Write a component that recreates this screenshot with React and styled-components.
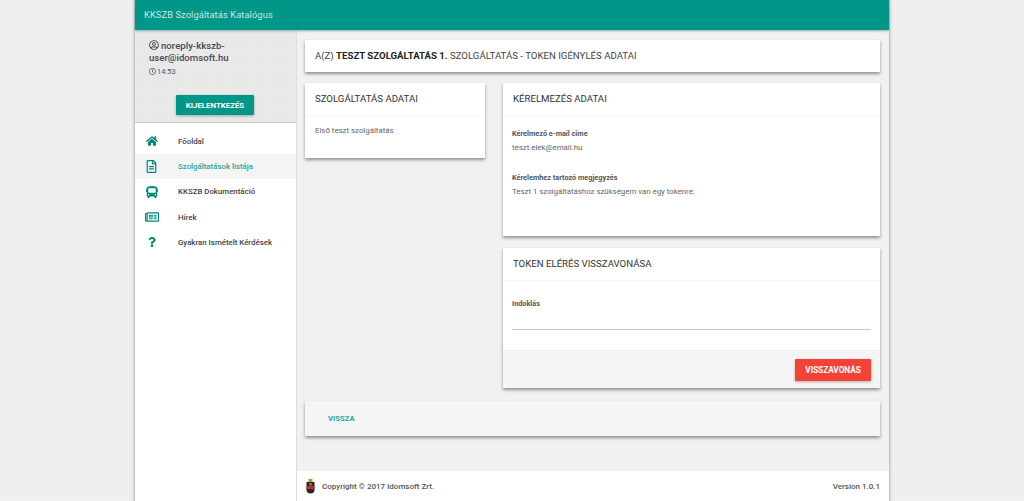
import styled, { createGlobalStyle } from "styled-components";
import { FaHome, FaRegFileAlt, FaBus, FaRegNewspaper, FaQuestion, FaRegUserCircle, FaRegClock } from "react-icons/fa";

const GlobalStyle = createGlobalStyle`
  html, body {
    margin: 0;
    padding: 0;
    height: 100%;
    overflow: hidden;
  }
  body {
    background-color: #f0f0f0;
    background-image: radial-gradient(#e9e9e9 0.6px, transparent 0.8px);
    background-size: 4px 4px;
    font-family: Roboto, "Liberation Sans", sans-serif;
    color: #333;
  }
`;

const Page = styled.div`
  width: 754px;
  height: 501px;
  margin-left: 135px;
  display: flex;
  flex-direction: column;
  box-shadow: 0 0 0 1px #c4c4c4, 0 0 3px 1px #bbb;
`;
const Header = styled.header`
  height: 30px;
  flex: none;
  background: #009688;
  color: #c8e6e2;
  font-size: 9.3px;
  line-height: 30px;
  padding-left: 9px;
  letter-spacing: 0.1px;
  box-shadow: 0 1px 2px rgba(0, 80, 70, 0.4);
  position: relative;
`;
const Body = styled.div`
  flex: 1;
  display: flex;
  min-height: 0;
`;
const Sidebar = styled.aside`
  width: 162px;
  flex: none;
  background: #fff;
  border-right: 1px solid #ddd;
  box-sizing: border-box;
`;
const Profile = styled.div`
  height: 93px;
  box-sizing: border-box;
  padding: 10px 14px 0 14px;
  background-color: #e9e9e9;
  background-image: radial-gradient(#e1e1e1 0.7px, transparent 1px);
  background-size: 5px 5px;
  border-bottom: 1px solid #ccc;
`;
const UserName = styled.div`
  font-size: 9.65px;
  line-height: 12px;
  font-weight: 500;
  color: #444b55;
  svg {
    font-size: 10px;
    vertical-align: -1px;
    margin-right: 2px;
  }
`;
const Clock = styled.div`
  font-size: 7.5px;
  line-height: 10px;
  margin-top: 3px;
  color: #555;
  svg {
    font-size: 7px;
    vertical-align: -1px;
    margin-right: 1px;
  }
`;
const LogoutRow = styled.div`
  display: flex;
  justify-content: center;
  margin-top: 18px;
  padding-right: 1px;
`;
const Button = styled.button`
  border: 0;
  border-radius: 1px;
  background: ${(p) => p.$bg};
  color: #fff;
  font-family: inherit;
  font-weight: 700;
  font-size: ${(p) => p.$size}px;
  width: ${(p) => p.$w}px;
  height: ${(p) => p.$h}px;
  padding: 0;
  box-shadow: 0 1px 3px rgba(0, 0, 0, 0.3);
`;
const Menu = styled.nav`
  display: flex;
  flex-direction: column;
  padding-top: 5.5px;
`;
const MenuItem = styled.div`
  height: 25.3px;
  display: flex;
  align-items: center;
  font-size: 7.85px;
  font-weight: 500;
  color: ${(p) => (p.$active ? "#26a69a" : "#444")};
  background: ${(p) => (p.$active ? "#f4f4f4" : "transparent")};
`;
const MenuIcon = styled.span`
  width: 43px;
  flex: none;
  display: flex;
  justify-content: center;
  padding-right: 10px;
  box-sizing: border-box;
  color: #00897b;
  font-size: ${(p) => p.$size || 12}px;
`;
const Main = styled.main`
  flex: 1;
  min-width: 0;
  display: flex;
  flex-direction: column;
  background: #f1f1f1;
`;
const Content = styled.div`
  flex: 1;
  min-height: 0;
  padding: 10px 9px 0 8px;
  display: flex;
  flex-direction: column;
`;
const Card = styled.section`
  background: ${(p) => p.$bg || "#fff"};
  box-shadow: 0 2px 3px rgba(0, 0, 0, 0.4);
  height: ${(p) => p.$h}px;
  flex: none;
  display: flex;
  flex-direction: column;
  box-sizing: border-box;
`;
const PageTitle = styled.h1`
  margin: 0;
  font-size: 9.65px;
  line-height: 32px;
  font-weight: 400;
  padding-left: 10px;
  color: #444;
  b {
    font-weight: 700;
    color: #222;
  }
`;
const Columns = styled.div`
  display: grid;
  grid-template-columns: 180px 377px;
  justify-content: space-between;
  margin-top: 11px;
  align-items: start;
`;
const Stack = styled.div`
  display: flex;
  flex-direction: column;
  gap: 12px;
`;
const CardTitle = styled.h2`
  margin: 0;
  height: 32px;
  font-size: 9.65px;
  line-height: 31px;
  font-weight: 400;
  padding-left: ${(p) => p.$pad || 10}px;
  color: #333;
  border-bottom: 1px solid #f6f6f6;
`;
const CardBody = styled.div`
  padding: ${(p) => p.$top}px 9px 0 ${(p) => p.$pad || 10}px;
  flex: 1;
`;
const Text = styled.p`
  margin: 0;
  font-size: 7.85px;
  line-height: 12px;
  color: #666;
`;
const Label = styled.div`
  font-size: 7.3px;
  line-height: 10px;
  font-weight: 700;
  color: #555;
  margin-bottom: 3px;
`;
const Field = styled.div`
  margin-bottom: 19px;
`;
const InputLine = styled.div`
  height: 1px;
  background: #c9c9c9;
  margin-top: 20px;
`;
const CardFooter = styled.div`
  height: 38px;
  background: #f5f5f5;
  border-top: 1px solid #eee;
  box-sizing: border-box;
  display: flex;
  justify-content: flex-end;
  align-items: center;
  padding-right: 9px;
`;
const BackRow = styled.div`
  margin-top: 13px;
`;
const BackLink = styled.a`
  font-size: 7.7px;
  font-weight: 700;
  line-height: 36px;
  color: #26a69a;
  padding-left: 23px;
`;
const Footer = styled.footer`
  height: 30px;
  flex: none;
  background: #fff;
  display: flex;
  align-items: center;
  justify-content: space-between;
  padding: 0 9px;
  font-size: 8px;
  font-weight: 500;
  color: #555;
`;
const Copyright = styled.div`
  display: flex;
  align-items: center;
  gap: 7px;
`;

function CoatOfArms() {
  return (
    <svg width="9" height="15" viewBox="0 0 9 15">
      <rect x="2.5" y="0" width="4" height="3" fill="#b8962e" />
      <path d="M0.5 3h8v7.5a4 4 0 0 1-8 0z" fill="#2a2a22" />
      <rect x="0.5" y="7" width="8" height="3" fill="#b5332c" />
      <rect x="3" y="4" width="3" height="2.5" fill="#6a7a3a" />
    </svg>
  );
}

const menuItems = [
  { label: "Főoldal", icon: <FaHome />, size: 12 },
  { label: "Szolgáltatások listája", icon: <FaRegFileAlt />, size: 13, active: true },
  { label: "KKSZB Dokumentáció", icon: <FaBus />, size: 12 },
  { label: "Hírek", icon: <FaRegNewspaper />, size: 14 },
  { label: "Gyakran Ismételt Kérdések", icon: <FaQuestion />, size: 10 },
];

export default function App() {
  return (
    <>
      <GlobalStyle />
      <Page>
        <Header>KKSZB Szolgáltatás Katalógus</Header>
        <Body>
          <Sidebar>
            <Profile>
              <UserName>
                <FaRegUserCircle />
                noreply-kkszb-user@idomsoft.hu
              </UserName>
              <Clock>
                <FaRegClock />
                14:53
              </Clock>
              <LogoutRow>
                <Button $bg="#009688" $w={78} $h={20} $size={7.85}>KIJELENTKEZÉS</Button>
              </LogoutRow>
            </Profile>
            <Menu>
              {menuItems.map((item) => (
                <MenuItem key={item.label} $active={item.active}>
                  <MenuIcon $size={item.size}>{item.icon}</MenuIcon>
                  {item.label}
                </MenuItem>
              ))}
            </Menu>
          </Sidebar>
          <Main>
            <Content>
              <Card $h={32}>
                <PageTitle>
                  A(Z) <b>TESZT SZOLGÁLTATÁS 1.</b> SZOLGÁLTATÁS - TOKEN IGÉNYLÉS ADATAI
                </PageTitle>
              </Card>
              <Columns>
                <Card $h={75}>
                  <CardTitle>SZOLGÁLTATÁS ADATAI</CardTitle>
                  <CardBody $top={9}>
                    <Text>Első teszt szolgáltatás</Text>
                  </CardBody>
                </Card>
                <Stack>
                  <Card $h={153}>
                    <CardTitle>KÉRELMEZÉS ADATAI</CardTitle>
                    <CardBody $top={13} $pad={9}>
                      <Field>
                        <Label>Kérelmező e-mail címe</Label>
                        <Text>teszt.elek@email.hu</Text>
                      </Field>
                      <Field>
                        <Label>Kérelemhez tartozó megjegyzés</Label>
                        <Text>Teszt 1 szolgáltatáshoz szükségem van egy tokenre.</Text>
                      </Field>
                    </CardBody>
                  </Card>
                  <Card $h={140}>
                    <CardTitle>TOKEN ELÉRÉS VISSZAVONÁSA</CardTitle>
                    <CardBody $top={18} $pad={9}>
                      <Label>Indoklás</Label>
                      <InputLine />
                    </CardBody>
                    <CardFooter>
                      <Button $bg="#f44336" $w={76} $h={22} $size={8.2}>VISSZAVONÁS</Button>
                    </CardFooter>
                  </Card>
                </Stack>
              </Columns>
              <BackRow>
                <Card $h={35} $bg="#f5f5f5">
                  <BackLink>VISSZA</BackLink>
                </Card>
              </BackRow>
            </Content>
            <Footer>
              <Copyright>
                <CoatOfArms />
                Copyright © 2017 Idomsoft Zrt.
              </Copyright>
              <span>Version 1.0.1</span>
            </Footer>
          </Main>
        </Body>
      </Page>
    </>
  );
}
